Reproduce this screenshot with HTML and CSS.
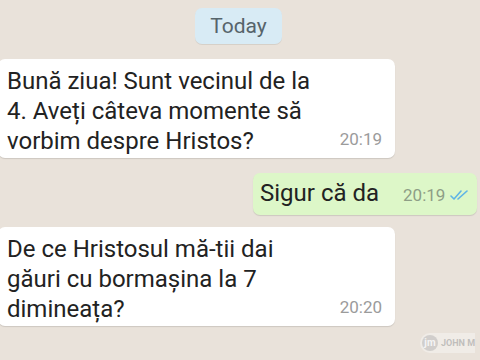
FILE: index.html
```html
<!DOCTYPE html>
<html lang="ro">
<head>
    <meta charset="UTF-8">
    <title>Chat</title>
    <link rel="stylesheet" href="styles.css">
</head>
<body>
    <div class="chat">
        <div class="day">Today</div>

        <div class="msg in">
            <div class="text">Bună ziua! Sunt vecinul de la<br>4. Aveți câteva momente să<br>vorbim despre Hristos?</div>
            <span class="time">20:19</span>
        </div>

        <div class="msg out">
            <div class="text">Sigur că da</div>
            <span class="time">20:19</span>
            <svg class="ticks" width="20" height="12" viewBox="0 0 20 12">
                <path d="M1 7 L4 10 L11 2" fill="none" stroke="#5fb4e6" stroke-width="1.6" stroke-linecap="round" stroke-linejoin="round"/>
                <path d="M8 10 L17 2" fill="none" stroke="#5fb4e6" stroke-width="1.6" stroke-linecap="round"/>
            </svg>
        </div>

        <div class="msg in">
            <div class="text">De ce Hristosul mă-tii dai<br>găuri cu bormașina la 7<br>dimineața?</div>
            <span class="time">20:20</span>
        </div>
    </div>

    <div class="watermark">
        <span class="wm-logo">jm</span>
        <span class="wm-name">JOHN M</span>
    </div>
</body>
</html>
```

FILE: styles.css
```css
body {
    margin: 0;
    height: 360px;
    overflow: hidden;
    background-color: #e9e2da;
    font-family: Roboto, "Noto Sans", sans-serif;
    position: relative;
}

.chat {
    display: flex;
    flex-direction: column;
    align-items: flex-start;
    padding-top: 8px;
}

.day {
    align-self: center;
    height: 36px;
    line-height: 36px;
    padding: 0 15px;
    margin-left: -3px;
    background-color: #d8ebf5;
    border-radius: 7px;
    color: #56646b;
    font-size: 21px;
    box-shadow: 0 1px 0.5px rgba(0,0,0,0.08);
}

.msg {
    display: flex;
    background-color: #fff;
    border-radius: 7px;
    box-shadow: 0 1px 1px rgba(0,0,0,0.12);
    color: #222;
}

.msg.in {
    width: 397px;
    height: 99px;
    box-sizing: border-box;
    margin-left: -2px;
    padding: 6px 13px 0 9px;
    align-items: flex-end;
    justify-content: space-between;
    margin-top: 15px;
}

.msg.in + .msg.out {
    margin-top: 15px;
}

.msg.out + .msg.in {
    margin-top: 12px;
}

.text {
    font-size: 24px;
    line-height: 30px;
}

.msg.in .text {
    padding-bottom: 2px;
}

.time {
    font-size: 17px;
    color: #9b9b9b;
    margin-bottom: 9px;
}

.msg.out {
    align-self: flex-end;
    margin-right: 3px;
    width: 224px;
    height: 42px;
    box-sizing: border-box;
    padding: 5px 0 0 7px;
    background-color: #ddf7c8;
    align-items: baseline;
}

.msg.out .time {
    margin-left: 24px;
    color: #8e9e86;
}

.ticks {
    margin-left: 5px;
}

.watermark {
    position: absolute;
    left: 420px;
    top: 333px;
    display: flex;
    align-items: center;
    gap: 3px;
    height: 20px;
    padding-left: 2px;
    border-radius: 10px 0 0 10px;
    background-color: rgba(255,255,255,0.35);
    color: rgba(150,150,150,0.55);
    font-size: 9px;
    font-weight: bold;
}

.wm-logo {
    width: 16px;
    height: 16px;
    border-radius: 50%;
    background-color: rgba(170,170,170,0.45);
    color: rgba(255,255,255,0.8);
    font-size: 10px;
    line-height: 15px;
    text-align: center;
}
```
